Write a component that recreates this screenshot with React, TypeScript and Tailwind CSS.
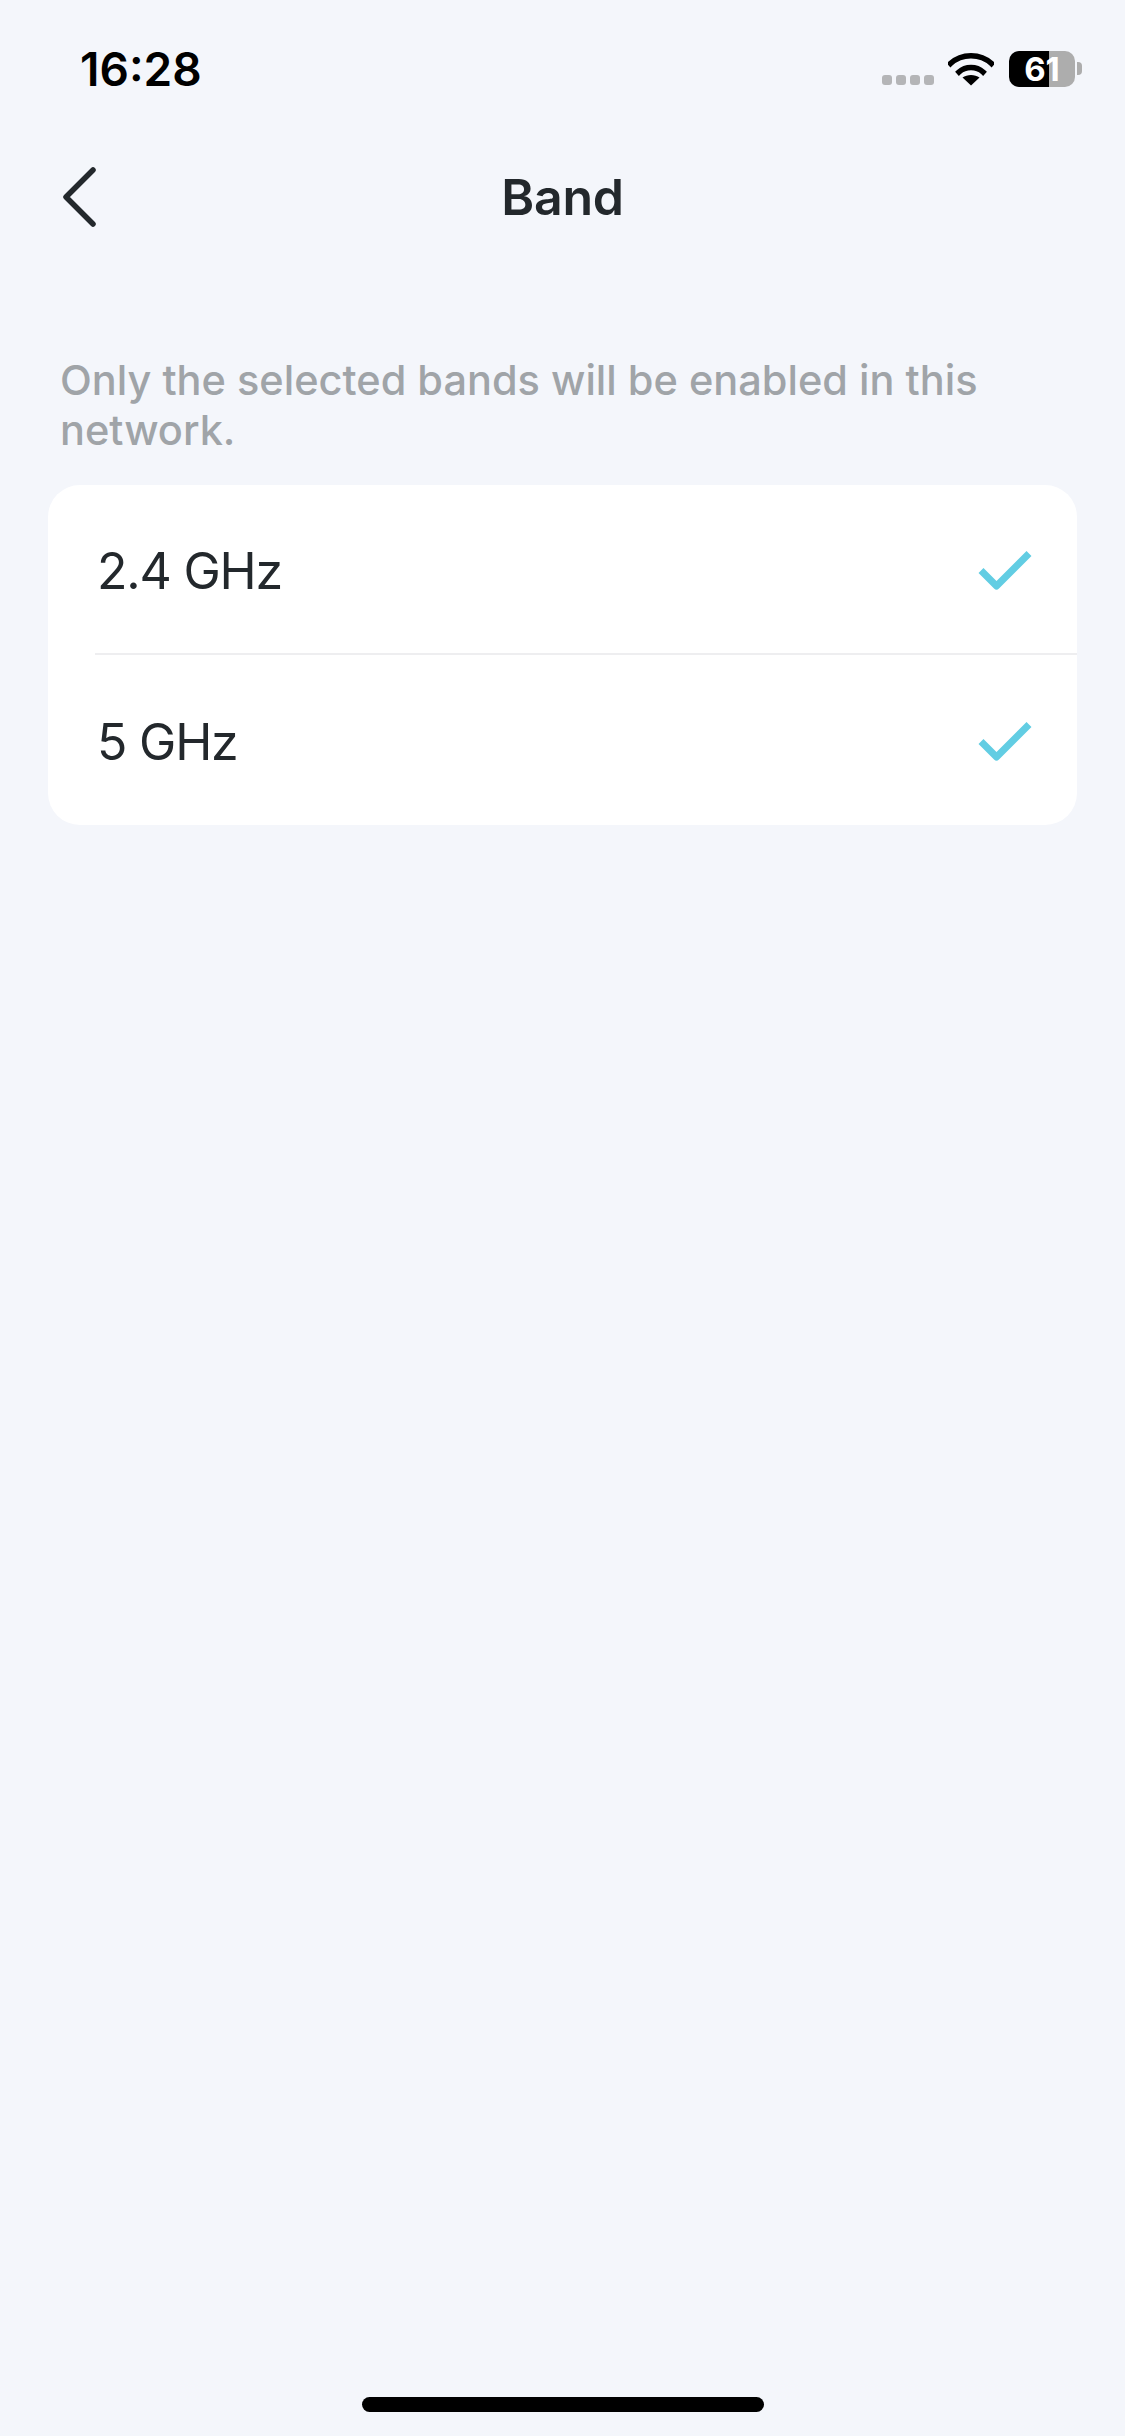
const bands = ["2.4 GHz", "5 GHz"];

const CheckIcon = () => (
  <svg className="mt-[3px]" width="54" height="40" viewBox="0 0 54 40" fill="none">
    <path d="M3 19.5L18.5 35L51 2.5" stroke="#62cde3" strokeWidth="7" strokeLinejoin="round" />
  </svg>
);

const StatusBar = () => (
  <div className="flex h-[100px] items-start justify-between pl-[80px] pr-[43px] pt-[43px]">
    <span className="text-[46px] leading-[52px] font-semibold text-black">16:28</span>
    <div className="flex items-start pt-[8px]">
      <div className="mt-[24px] flex gap-[4px]">
        <div className="h-[10px] w-[10px] rounded-[3px] bg-[#b4b5b7]" />
        <div className="h-[10px] w-[10px] rounded-[3px] bg-[#b4b5b7]" />
        <div className="h-[10px] w-[10px] rounded-[3px] bg-[#b4b5b7]" />
        <div className="h-[10px] w-[10px] rounded-[3px] bg-[#b4b5b7]" />
      </div>
      <svg className="ml-[14px] mt-[1px]" width="46" height="34" viewBox="0 0 46 34" fill="none">
        <path d="M2.5 11.5C13.5 1 32.5 1 43.5 11.5" stroke="#000" strokeWidth="5.5" strokeLinecap="square" />
        <path d="M11 20C17.5 14 28.5 14 35 20" stroke="#000" strokeWidth="5.5" strokeLinecap="square" />
        <path d="M23 33.5L14.5 25.5C19 22 27 22 31.5 25.5Z" fill="#000" />
      </svg>
      <div className="ml-[15px] flex h-[36px] w-[66px] items-center justify-center rounded-[10px] bg-[linear-gradient(90deg,#000_0,#000_40px,#adadad_40px,#adadad_100%)] text-[33px] leading-none font-bold text-white">
        61
      </div>
      <div className="ml-[2px] mt-[11px] h-[13px] w-[5px] rounded-r-[4px] bg-[#adadad]" />
    </div>
  </div>
);

export default function App() {
  return (
    <div className="flex h-[2436px] w-[1125px] flex-col overflow-hidden bg-[#f4f6fb] font-['Inter',sans-serif]">
      <StatusBar />
      <div className="relative mt-[48px] flex h-[97px] items-center justify-center">
        <svg className="absolute left-[60px] top-[17px]" width="40" height="64" viewBox="0 0 40 64" fill="none">
          <path d="M33 5L6 32L33 59" stroke="#23282c" strokeWidth="5.5" strokeLinecap="round" strokeLinejoin="round" />
        </svg>
        <h1 className="text-[50px] leading-[60px] font-semibold tracking-[-0.3px] text-[#23282c]">Band</h1>
      </div>
      <p className="mt-[110px] px-[60px] text-[41.5px] leading-[50px] font-[450] text-[#a0a4a8]">
        Only the selected bands will be enabled in this network.
      </p>
      <div className="mx-[48px] mt-[30px] rounded-[32px] bg-white">
        {bands.map((band, i) => (
          <div
            key={band}
            className={`ml-[47px] flex h-[170px] items-center justify-between pr-[45px] ${i === 0 ? "border-b-2 border-[#eeeef0]" : ""}`}
          >
            <span className="ml-[2px] pt-[3px] text-[50px] leading-[60px] tracking-[-1.2px] text-[#23282c]">{band}</span>
            <CheckIcon />
          </div>
        ))}
      </div>
      <div className="mt-auto mb-[24px] h-[15px] w-[402px] self-center rounded-full bg-black" />
    </div>
  );
}
